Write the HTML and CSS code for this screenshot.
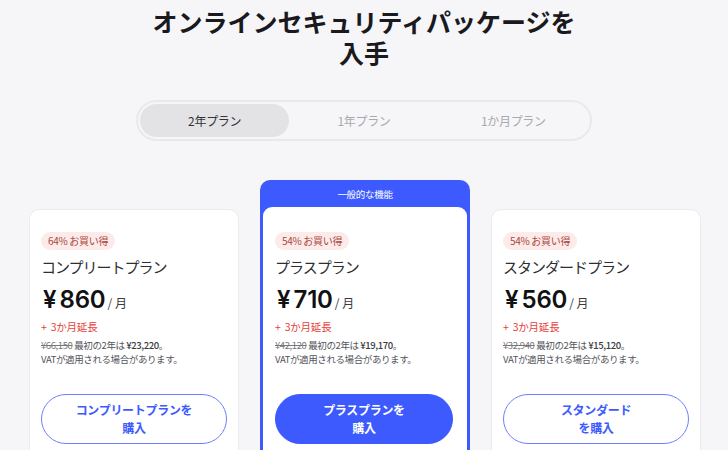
FILE: index.html
```html
<!DOCTYPE html>
<html lang="ja">
<head>
<meta charset="utf-8">
<link rel="stylesheet" href="styles.css">
</head>
<body>
<h1 class="title">オンラインセキュリティパッケージを<br>入手</h1>
<div class="tabs">
  <div class="tab active">2年プラン</div>
  <div class="tab">1年プラン</div>
  <div class="tab">1か月プラン</div>
</div>
<div class="plans">
  <div class="card">
    <span class="badge">64% お買い得</span>
    <div class="name">コンプリートプラン</div>
    <div class="price"><span class="yen">¥</span><span class="num">860</span><span class="per">/ 月</span></div>
    <div class="extra"><span class="plus">+</span>3か月延長</div>
    <div class="note"><s>¥66,150</s> 最初の2年は <b>¥23,220</b>。<br>VATが適用される場合があります。</div>
    <button class="buy">コンプリートプランを<br>購入</button>
  </div>
  <div class="card featured">
    <div class="feat-head">一般的な機能</div>
    <div class="feat-body">
      <span class="badge">54% お買い得</span>
      <div class="name">プラスプラン</div>
      <div class="price"><span class="yen">¥</span><span class="num">710</span><span class="per">/ 月</span></div>
      <div class="extra"><span class="plus">+</span>3か月延長</div>
      <div class="note"><s>¥42,120</s> 最初の2年は <b>¥19,170</b>。<br>VATが適用される場合があります。</div>
      <button class="buy primary">プラスプランを<br>購入</button>
    </div>
  </div>
  <div class="card">
    <span class="badge">54% お買い得</span>
    <div class="name">スタンダードプラン</div>
    <div class="price"><span class="yen">¥</span><span class="num">560</span><span class="per">/ 月</span></div>
    <div class="extra"><span class="plus">+</span>3か月延長</div>
    <div class="note"><s>¥32,940</s> 最初の2年は <b>¥15,120</b>。<br>VATが適用される場合があります。</div>
    <button class="buy">スタンダード<br>を購入</button>
  </div>
</div>
</body>
</html>
```
FILE: styles.css
```css
* { box-sizing: border-box; }
body {
  margin: 0;
  background: #f6f6f8;
  font-family: "Noto Sans CJK JP", "Noto Sans", sans-serif;
  color: #1b1b1f;
}
.title {
  margin: 6px 0 0;
  font-size: 25px;
  line-height: 31px;
  font-weight: 700;
  text-align: center;
  color: #1a1a1e;
}
.tabs {
  width: 456px;
  height: 41px;
  margin: 32px auto 0;
  border: 2px solid #e9e9ed;
  border-radius: 21px;
  padding: 2px;
  display: grid;
  grid-template-columns: 1fr 1fr 1fr;
}
.tab {
  display: flex;
  align-items: center;
  justify-content: center;
  font-size: 12px;
  color: #a9a9ae;
  border-radius: 17px;
  letter-spacing: -0.3px;
}
.tab.active {
  background: #e3e3e6;
  color: #333338;
}
.plans {
  display: flex;
  justify-content: center;
  align-items: flex-start;
  gap: 21px;
  margin-top: 39px;
  padding-left: 2px;
}
.card {
  width: 210px;
  background: #fff;
  border: 1px solid #ebebef;
  border-radius: 10px;
  margin-top: 29px;
  padding: 22px 11px 30px;
  display: flex;
  flex-direction: column;
  align-items: flex-start;
}
.card.featured {
  margin-top: 0;
  padding: 0 3px 3px;
  border: none;
  background: #3d5afe;
}
.feat-head {
  align-self: stretch;
  height: 27px;
  display: flex;
  align-items: center;
  justify-content: center;
  color: #fff;
  font-size: 9.5px;
  letter-spacing: -0.3px;
}
.feat-body {
  align-self: stretch;
  background: #fff;
  border-radius: 9px;
  padding: 25px 12px 30px;
  display: flex;
  flex-direction: column;
  align-items: flex-start;
}
.badge {
  height: 18px;
  padding: 0 7px;
  border-radius: 9px;
  background: #fdebea;
  color: #a9463e;
  font-size: 10px;
  line-height: 18px;
  letter-spacing: -0.3px;
}
.name {
  margin-top: 6px;
  font-size: 15px;
  line-height: 22px;
  letter-spacing: -1px;
  color: #2e2e33;
}
.price {
  margin-top: 6px;
  height: 30px;
  display: flex;
  align-items: baseline;
  color: #111114;
}
.yen {
  font-family: "Inter", "Noto Sans", sans-serif;
  font-size: 24px;
  font-weight: 600;
  margin-left: 2px;
  margin-right: 3px;
  line-height: 32px;
}
.num {
  font-family: "Inter", "Noto Sans", sans-serif;
  font-size: 24px;
  font-weight: 600;
  line-height: 32px;
  letter-spacing: -0.2px;
}
.per {
  font-size: 12px;
  color: #3a3a40;
  margin-left: 2px;
}
.extra {
  margin-top: 5px;
  font-size: 10.5px;
  line-height: 16px;
  color: #e6403a;
  letter-spacing: -0.2px;
}
.plus { margin-right: 4px; }
.note {
  margin-top: 3px;
  font-size: 9.5px;
  line-height: 14px;
  color: #55555c;
  letter-spacing: -0.4px;
}
.note s { color: #77777d; }
.note b { font-weight: 500; color: #3a3a40; }
.buy {
  margin-top: 28px;
  align-self: stretch;
  height: 50px;
  border-radius: 25px;
  border: 1.5px solid #6e80fd;
  background: #fff;
  color: #3d5afe;
  font-family: "Noto Sans CJK JP", sans-serif;
  font-size: 12px;
  font-weight: 700;
  line-height: 18px;
  letter-spacing: -0.3px;
  padding: 0;
}
.buy.primary {
  background: #3d5afe;
  border-color: #3d5afe;
  color: #fff;
  margin-right: 2px;
}
```
